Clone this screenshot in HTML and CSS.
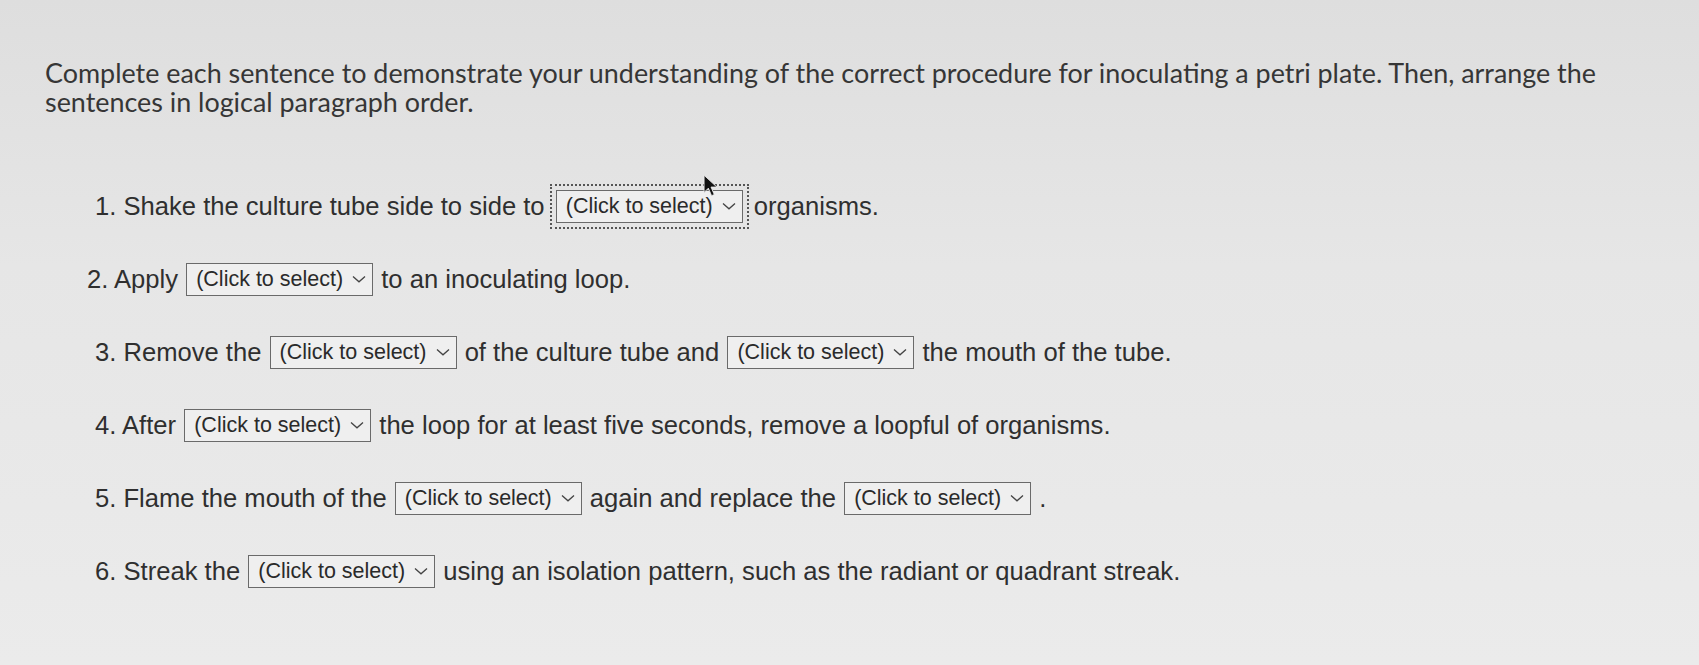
FILE: index.html
```html
<!DOCTYPE html>
<html>
<head>
<meta charset="utf-8">
<link rel="stylesheet" href="styles.css">
</head>
<body>
<main class="page">
  <p class="intro">Complete each sentence to demonstrate your understanding of the correct procedure for inoculating a petri plate. Then, arrange the sentences in logical paragraph order.</p>
  <div class="items">
    <div class="row">1. Shake the culture tube side to side to <span class="focus"><span class="sel">(Click to select)<svg class="chev" viewBox="0 0 14 8"><path d="M1 1.5 L7 6.8 L13 1.5"/></svg></span></span> organisms.</div>
    <div class="row r-left">2. Apply <span class="sel">(Click to select)<svg class="chev" viewBox="0 0 14 8"><path d="M1 1.5 L7 6.8 L13 1.5"/></svg></span> to an inoculating loop.</div>
    <div class="row">3. Remove the <span class="sel">(Click to select)<svg class="chev" viewBox="0 0 14 8"><path d="M1 1.5 L7 6.8 L13 1.5"/></svg></span> of the culture tube and <span class="sel">(Click to select)<svg class="chev" viewBox="0 0 14 8"><path d="M1 1.5 L7 6.8 L13 1.5"/></svg></span> the mouth of the tube.</div>
    <div class="row">4. After <span class="sel">(Click to select)<svg class="chev" viewBox="0 0 14 8"><path d="M1 1.5 L7 6.8 L13 1.5"/></svg></span> the loop for at least five seconds, remove a loopful of organisms.</div>
    <div class="row">5. Flame the mouth of the <span class="sel">(Click to select)<svg class="chev" viewBox="0 0 14 8"><path d="M1 1.5 L7 6.8 L13 1.5"/></svg></span> again and replace the <span class="sel">(Click to select)<svg class="chev" viewBox="0 0 14 8"><path d="M1 1.5 L7 6.8 L13 1.5"/></svg></span> .</div>
    <div class="row">6. Streak the <span class="sel">(Click to select)<svg class="chev" viewBox="0 0 14 8"><path d="M1 1.5 L7 6.8 L13 1.5"/></svg></span> using an isolation pattern, such as the radiant or quadrant streak.</div>
  </div>
  <svg class="cursor" viewBox="0 0 14 22"><path d="M1 1 L1 17 L5 13 L8 20 L10.5 19 L7.5 12 L13 12 Z"/></svg>
</main>
</body>
</html>
```

FILE: styles.css
```css
html, body {
  margin: 0;
  padding: 0;
}
body {
  background: linear-gradient(180deg, #dedede 0%, #e6e6e6 40%, #ebebeb 100%);
  color: #3a3a3a;
  height: 665px;
  overflow: hidden;
}
.page {
  position: relative;
  padding: 58px 20px 0 45px;
}
.intro {
  margin: 0;
  font-family: "Lato", "Liberation Sans", sans-serif;
  font-size: 26.9px;
  line-height: 29px;
  color: #363636;
  max-width: 1620px;
}
.items {
  display: flex;
  flex-direction: column;
  gap: 37px;
  margin-top: 72px;
  padding-left: 50px;
}
.row {
  font-family: "Liberation Sans", Arial, sans-serif;
  font-size: 25.6px;
  line-height: 34px;
  height: 36px;
  display: flex;
  align-items: center;
  color: #2f2f2f;
  white-space: pre;
}
.r-left {
  margin-left: -8px;
}
.sel {
  display: inline-flex;
  align-items: center;
  gap: 9px;
  height: 33px;
  padding: 0 6px 0 9px;
  border: 1px solid #6a6a6a;
  background: #efefef;
  font-size: 21.5px;
  color: #2a2a2a;
  line-height: 31px;
  box-sizing: border-box;
  margin: 0 1px;
}
.chev {
  width: 14px;
  height: 8px;
  fill: none;
  stroke: #444;
  stroke-width: 1.3;
}
.focus {
  display: inline-flex;
  outline: 2px dotted #555;
  outline-offset: 4px;
  margin: 0 4px;
}
.focus .sel {
  margin: 0;
}
.cursor {
  position: absolute;
  left: 703px;
  top: 174px;
  width: 15px;
  height: 24px;
  fill: #111;
  stroke: #eee;
  stroke-width: 0.8;
}
```
